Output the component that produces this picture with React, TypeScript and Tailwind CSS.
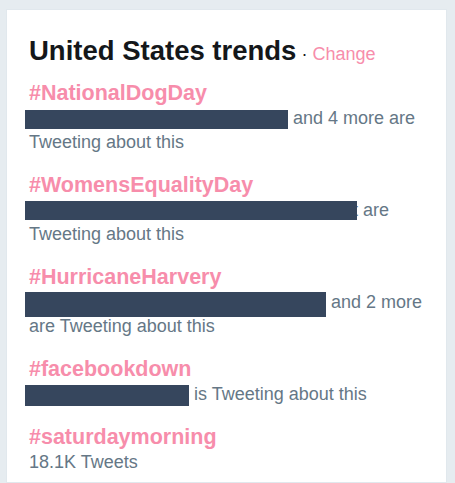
import React from "react";

const Bar = ({ w, h, d }: { w: number; h: number; d: number }) => (
  <span
    className="relative -ml-[4px] inline-block bg-[#36465d] align-baseline"
    style={{ width: w, height: h, marginTop: -(h - d), marginBottom: -d }}
  />
);

function Trend({ tag, children }: { tag: string; children: React.ReactNode }) {
  return (
    <div className="flex flex-col">
      <div className="text-[21.5px] font-bold leading-[26px] text-[#f78dab]">{tag}</div>
      <div className="text-[18px] leading-[24px] text-[#657786]">{children}</div>
    </div>
  );
}

export default function App() {
  return (
    <div
      className="h-[483px] overflow-hidden bg-[#e6ecf0] pl-[6px] pt-[9px]"
      style={{ fontFamily: '"Liberation Sans", Arial, sans-serif' }}
    >
      <div className="flex h-full w-[441px] flex-col gap-[9px] border border-[#e1e8ed] bg-white pl-[22px] pr-[16px] pt-[24px]">
        <div className="leading-[33px]">
          <span className="text-[27.5px] font-bold text-[#14171a]">United States trends</span>
          <span className="text-[18px] text-[#14171a]"> · </span>
          <span className="text-[18px] text-[#f78dab]">Change</span>
        </div>
        <div className="flex flex-col gap-[18px]">
          <Trend tag="#NationalDogDay">
            <Bar w={263} h={19} d={5} /> and 4 more are Tweeting about this
          </Trend>
          <Trend tag="#WomensEqualityDay">
            <Bar w={332} h={19} d={4} />
            <span className="-ml-[4px]">t</span> are Tweeting about this
          </Trend>
          <Trend tag="#HurricaneHarvery">
            <Bar w={301} h={25} d={9} /> and 2 more are Tweeting about this
          </Trend>
          <Trend tag="#facebookdown">
            <Bar w={164} h={21} d={6} /> is Tweeting about this
          </Trend>
          <Trend tag="#saturdaymorning">18.1K Tweets</Trend>
        </div>
      </div>
    </div>
  );
}
